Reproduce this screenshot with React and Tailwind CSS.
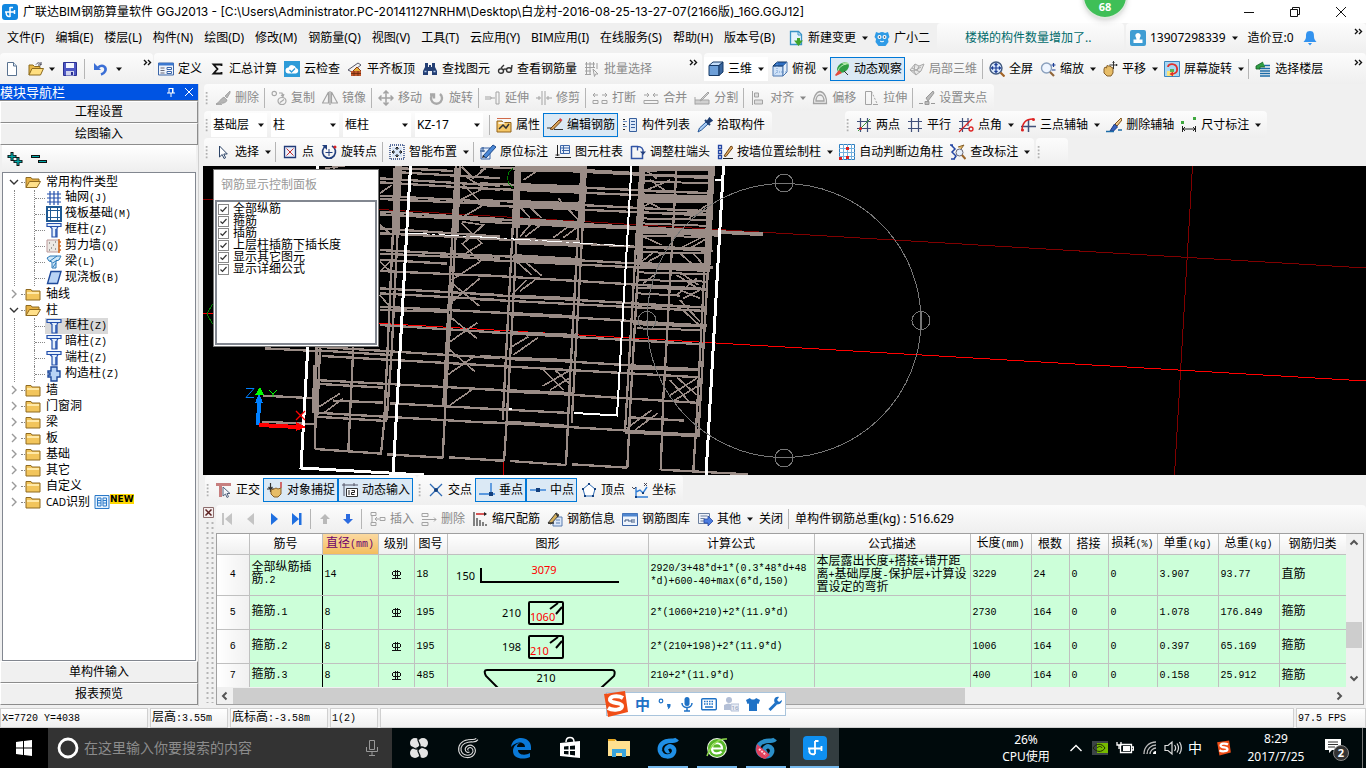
import React, { useState } from 'react';

const UI = "font-['Noto_Sans','Noto_Sans_CJK_SC',sans-serif]";

// 16x16 toolbar glyphs
const icons = {
  newFile: <><path d="M3.500 1.500h6l3 3.500v9.500h-9z" fill="#fff" stroke="#5a7390" /><path d="M9.500 1.500v3.500h3" fill="#dbe7f5" stroke="#5a7390" /></>,
  open: <><path d="M1 14V4h4l1.500 1.500H12V8" fill="#e8b84a" stroke="#8c6a1d" /><path d="M1 14l3-6.500h11.500l-3 6.500z" fill="#ffdf80" stroke="#8c6a1d" /><path d="M8 3.500c2-2.500 4-2 5 .5M13 1v3h-3" fill="none" stroke="#445" /></>,
  save: <><path d="M1.500 1.500h13v13h-13z" fill="#4d57c4" stroke="#2b3192" /><path d="M4 2h8v5H4z" fill="#f4f6ff" /><path d="M4 10h8v4.500H4z" fill="#cfd3ee" /><path d="M9 11h2v3H9z" fill="#2b3192" /></>,
  undo: <><path d="M5 6.500c5-4 9 0 7 4-1 2-2.500 2.500-4 3" fill="none" stroke="#3b6fd6" strokeWidth="2.600" /><path d="M1 2v7h7z" fill="#3b6fd6" /></>,
  define: <><path d="M.5 2h15v12H.5z" fill="#eef3fb" stroke="#3c66a8" /><path d="M.5 2h15v2.500H.5z" fill="#3c78cf" /><path d="M2.500 7h4M2.500 9.500h4M2.500 12h4" stroke="#667" /><path d="M9 6.500h4.500v2H9zM9 10.500h4.500v2H9z" fill="#fff" stroke="#3c66a8" /></>,
  sigma: <path d="M12.500 5V3.500h-8L8.500 8l-4 4.500h8V11" fill="none" stroke="#111" strokeWidth="1.800" />,
  cloud: <><path d="M0 0h16v16H0z" fill="#2d9bd8" /><path d="M4.500 12.500a3 3 0 010-6 4 4 0 017.500.5 2.800 2.800 0 010 5.500z" fill="#fff" /><path d="M5.500 9l2 2 3.500-3.500" fill="none" stroke="#2d9bd8" strokeWidth="1.300" /></>,
  slab: <><path d="M1 9l10-7 3 2-9 7z" fill="#f2f2f2" stroke="#556" /><path d="M4 10h10v5H4z" fill="#c0562c" /><path d="M6 10l4-4 4 4" fill="#e6b23c" stroke="#8e3c14" /><path d="M4 12.500h10M7 10v5M11 10v5" stroke="#5c2206" strokeWidth=".7" /></>,
  find: <><path d="M3 2h3v4h1V4h2v2h1V2h3v4l2 4v4h-5v-4H6v4H1v-4l2-4z" fill="#243f74" /><path d="M2.500 10.500h2M11.500 10.500h2" stroke="#a9c4ea" strokeWidth="1.500" /></>,
  glasses: <path d="M1.500 10c0-3 5-3 5 0s-5 3-5 0m8-1c0-3 5-3 5 0s-5 3-5 0m-3 0c1-1.500 2-1.500 3 0M4 7l3-3M14.500 8l.5-4" fill="none" stroke="#333" strokeWidth="1.400" />,
  batch: <path d="M1 3h10M1 6.500h10M1 10h6M1 13.500h6M2.500 1v13M6 1v13M9.500 1v6M9 8l5 5-2.500 0-1 2.500zM13 2v6" fill="none" stroke="#a0a0a0" />,
  cube: <><path d="M1 4.500h10v10H1z" fill="#6d9fd8" stroke="#173a66" /><path d="M1 4.500l4-3.500h10l-4 3.500z" fill="#c5defa" stroke="#173a66" /><path d="M11 4.500l4-3.500v10l-4 3.500z" fill="#38659e" stroke="#173a66" /></>,
  topView: <><path d="M1 5h10v10H1z" fill="#cfe2f8" stroke="#4a77b0" /><path d="M1 5l4-4h10l-4 4z" fill="#2f6fc2" stroke="#173a66" /><path d="M11 5l4-4v10l-4 4z" fill="#e6f0fb" stroke="#4a77b0" /><path d="M5 1v10h10M5 11l-4 4" fill="none" stroke="#7ba1d0" strokeDasharray="1 1" /></>,
  orbit: <><ellipse cx="9" cy="6.500" rx="6.500" ry="4.500" transform="rotate(-35 9 6.500)" fill="#2f9e44" /><path d="M8 2l5-1 2 2-5 1z" fill="#a7e3a0" /><path d="M4 10c1-4 4-6 8-7" stroke="#b9ecb4" fill="none" /><path d="M1 14l4-5 3 3-6 3z" fill="#e34b3c" /><path d="M10 10l4 4" stroke="#333" /></>,
  orbitGray: <path d="M1 9l5-6 4 2 5-2-3 7-5 4zM6 3l-1 7 2 4M10 5l-2 5M3 7l8 4M1 9l4 1 7-4" fill="#e6e6e6" stroke="#a9a9a9" />,
  full: <><circle cx="7" cy="7" r="6" fill="#dceafd" stroke="#41597e" strokeWidth="1.400" /><path d="M7 2.500v9M2.500 7h9M5.500 4L7 2.500 8.500 4M5.500 10L7 11.500 8.500 10M4 5.500L2.500 7 4 8.500M10 5.500L11.500 7 10 8.500" fill="none" stroke="#1d3f96" strokeWidth="1.200" /><path d="M11.500 11.500l4 4" stroke="#a26325" strokeWidth="2.200" /></>,
  zoom: <><circle cx="6.500" cy="7" r="5" fill="#eef5ff" stroke="#8aa0bd" strokeWidth="1.400" /><path d="M10 11l4 4" stroke="#8f6438" strokeWidth="2.200" /><path d="M11.500 4h4M13.500 2v4M12 9h3.500" stroke="#1d3f96" strokeWidth="1.200" /></>,
  pan: <><path d="M2 8l1-2 1.500 1L5 4.500l1.500.5L8 5l1 1 2 1v5l-2 3H5L2 12z" fill="#e7bd68" stroke="#86602a" /><path d="M11.500 0v8M7.500 4h8M10.500 1.500l1-1 1 1M14 3l1 1-1 1" fill="none" stroke="#333" /></>,
  rotateScreen: <><path d="M.5.5h15v15H.5z" fill="#a8d7f4" stroke="#3c86bd" /><path d="M3 10h7v5H3z" fill="#f7e27c" /><path d="M4 6c0-4 8-4 9 1s-3 6-6 6" fill="none" stroke="#e0302b" strokeWidth="1.800" /><path d="M9 10.500L5.500 13 9 15.500z" fill="#e0302b" /><path d="M6 8h4v3H6z" fill="#5ab552" /></>,
  floors: <><path d="M5 4.500h10M4 7.500h11M5 10h10M5 12.500h10M5 15h10" stroke="#1c6ca8" strokeWidth="1.400" /><path d="M8 1L1 5v3h4V6h5" fill="#2f9e44" stroke="#145c24" strokeWidth=".8" /></>,
  brushGray: <path d="M15 1l-5 5 2 2 3-5zM9 7l3 3c-1 4-6 3-11 4 3-1 4-5 8-7zM1 14.500h6" fill="#b5b5b5" stroke="#9c9c9c" strokeWidth=".8" />,
  copy: <path d="M5.500 3.500a2.200 2.200 0 11-4.400 0 2.200 2.200 0 014.400 0M15 11a4 3.500 0 11-8 0 4 3.500 0 018 0M8 3h3l1 3M10 5l2 1.500L13 4M9 12.500l4-3" fill="none" stroke="#a8a8a8" strokeWidth="1.200" />,
  mirror: <path d="M6.500 2v11h-6zM9.500 2v11h6zM8 1v14" fill="none" stroke="#a3a3a3" strokeWidth="1.200" />,
  move: <path d="M8 1v14M1 8h14M5.500 3.500L8 1l2.500 2.500M5.500 12.500L8 15l2.500-2.500M3.500 5.500L1 8l2.500 2.500M12.500 5.500L15 8l-2.500 2.500" fill="none" stroke="#a3a3a3" strokeWidth="1.500" />,
  rotate: <path d="M4 4a5.500 5.500 0 107 0M1 4.500h4v4" fill="none" stroke="#a8a8a8" strokeWidth="2.400" />,
  extend: <path d="M0 7h6v2H0M6 8h4M11 2v12h3V2z" fill="none" stroke="#a3a3a3" />,
  trim: <path d="M0 8h5M10 8h6M6 1v14M9 1v14M3 6v4M12 6v4" fill="none" stroke="#a3a3a3" />,
  breakIt: <path d="M1 10.500h5v3H1zM10 10.500h5v3h-5zM1 5h5M3 3L1 5l2 2M15 5h-5M13 3l2 2-2 2" fill="none" stroke="#a3a3a3" />,
  merge: <path d="M1 10.500h14v3H1zM1 5h5M4 3l2 2-2 2M15 5h-5M12 3l-2 2 2 2" fill="none" stroke="#a3a3a3" />,
  split: <path d="M1 14.500V7M1 10h14v4H1M14 2L7 9l-1 2 2-1 7-7z" fill="#d0d0d0" stroke="#a3a3a3" />,
  align: <path d="M2.500 1v14M4.500 3h4v4h-4zM4.500 10h8v4h-8z" fill="#ddd" stroke="#a3a3a3" />,
  offset: <path d="M8 1.500c5 1 7 7 6.500 12H1.500C1 8 4 2 8 1.500zM8 5c2.500 0 4 3 4 6H4c0-3 1.500-6 4-6z" fill="#eee" stroke="#a3a3a3" strokeWidth="1.300" />,
  stretch: <><path d="M2.500 1.500h6v13h-6zM10 14.500h5" fill="none" stroke="#a3a3a3" /><path d="M8.500 1.500l6 13" stroke="#a3a3a3" strokeDasharray="2 1.500" /></>,
  grip: <path d="M14 1L7 8l2 3 6-8zM0 13.500h4M6 11.500h4v3H6zM12 13.500h4" fill="#bbb" stroke="#999" />,
  props: <><path d="M1 4h5l1 1.500h8V15H1z" fill="#f6c766" stroke="#936318" /><path d="M1 1.500h14" stroke="#d06a4a" /><path d="M3 12l4-4 3 3 3-4" stroke="#333" fill="none" strokeWidth="1.500" /><path d="M2.500 6h6" stroke="#fff" strokeWidth="1.500" /></>,
  editRebar: <><path d="M0 11h8M7 12.500h9" stroke="#333" strokeWidth="1.200" /><path d="M3 12l9-9 2 1.500-8 8z" fill="#d6a35b" stroke="#6c4214" /><path d="M12 3l1-2 2.500 2L14 4.500z" fill="#d63d3d" /></>,
  list: <><path d="M7.500 1.500h7v13h-7z" fill="#dce8f8" stroke="#365f9d" /><path d="M9 4.500h4M9 7.500h4M9 10.500h4" stroke="#365f9d" /><path d="M1 2.500h3M1 7.500h3M1 12.500h3" stroke="#222" strokeDasharray="2 1" /><path d="M1 4.500h4M1 9.500h4" stroke="#6a8cc0" /></>,
  picker: <><path d="M1 15l1.500-4L9 5l2 2-6.500 6z" fill="#a9cdf6" stroke="#245596" /><path d="M8 3l5 5M10 5l2.500-3.500 2 2L11 6" stroke="#1f3f73" strokeWidth="2" fill="#1f3f73" /></>,
  twoPt: <><path d="M1 4.500h14M1 11.500h14M4.500 1v14M11.500 1v14" stroke="#41507a" strokeWidth="1.200" /><path d="M2 14L14 2" stroke="#3a9a3a" /><circle cx="4.500" cy="11.500" r="1.500" fill="#d22" /></>,
  parallel: <path d="M1 4.500h14M1 11.500h14M4.500 1v14M11.500 1v14" stroke="#41507a" strokeWidth="1.200" />,
  ptAngle: <><path d="M1 4.500h11M1 11.500h11M4.500 1v14M10 1v8" stroke="#41507a" strokeWidth="1.200" /><path d="M1 15L14 2" stroke="#d22" strokeWidth="1.300" /><circle cx="13" cy="12" r="2" fill="none" stroke="#d22" strokeWidth="1.300" /></>,
  threePt: <><path d="M1 9.500h15M8.500 3v12" stroke="#41507a" strokeWidth="1.500" /><path d="M2 14C2 6 6 2 13 2" fill="none" stroke="#d22" strokeWidth="1.500" /><circle cx="13.500" cy="2.500" r="1.500" fill="#d22" /><circle cx="2.500" cy="13" r="1.500" fill="#d22" /></>,
  delAxis: <><path d="M15 1L9 7l2 2 5-6z" fill="#f0c68b" stroke="#7b5019" /><path d="M8.500 7l3 3-4 4H4z" fill="#3a63bf" stroke="#1c3a80" /><path d="M0 14.500h8M12 13h4" stroke="#1c6ca8" strokeWidth="1.500" /></>,
  dims: <><path d="M1.500 9v6M14.500 9v6M2 12h12M4 10l-2 2 2 2M12 10l2 2-2 2" fill="none" stroke="#222" /><path d="M0 4h3v3H0zM12 0h3v3h-3z" fill="#3fa83f" /></>,
  pointer: <path d="M4.500 2v11l2.700-2.500 1.800 4 1.600-.8-1.800-3.700h3.500z" fill="#fff" stroke="#2c4467" />,
  point: <><path d="M2.500 2.500h11v11h-11z" fill="#e9effb" stroke="#223a78" strokeWidth="1.300" /><path d="M4.500 4.500l7 7M11.500 4.500l-7 7" stroke="#c22b2b" /></>,
  rotPoint: <><path d="M5 2a6.500 6.500 0 106 0" fill="none" stroke="#223f7d" strokeWidth="1.700" /><path d="M1 1h5v5z" fill="#223f7d" /><path d="M8 5v7M4.500 8.500h7" stroke="#223f7d" /><circle cx="14" cy="3" r="1.500" fill="#d22" /></>,
  smart: <><path d="M1 1h14v14H1z" fill="none" stroke="#223f7d" strokeDasharray="1 1" strokeWidth="1.400" /><path d="M3 3h10v10H3z" fill="#d8e6f8" /><path d="M8 3v3M8 10v3M3 8h3M10 8h3M6.500 5L8 3l1.500 2M6.500 11L8 13l1.500-2M5 6.500L3 8l2 1.500M11 6.500L13 8l-2 1.500" stroke="#111" fill="none" /></>,
  inPlace: <><path d="M1 4h9v11H1z" fill="#e4edf9" stroke="#3c66a8" /><path d="M3 12L13 1l3 2L6 14z" fill="#4b88d6" stroke="#1f4a8a" /><path d="M2 14l1-3 2 2z" fill="#222" /><path d="M0 7h5M3 3v5" stroke="#1f4a8a" /></>,
  colTable: <><path d="M5.500 1.500h9v8h-9z" fill="#e7effa" stroke="#3c66a8" /><path d="M5.500 4h9M8.500 2v7M7 6.500h7" stroke="#3c66a8" /><path d="M2.500 1v11M0 13.500h16M.5 11h4" stroke="#222" /></>,
  colEnd: <><path d="M1.500 2v12.500h11V10" fill="none" stroke="#3154a5" strokeWidth="1.500" /><path d="M1.500 2.500h6v4M7.500 2.500c4 0 6 2 5.500 6" fill="none" stroke="#3154a5" strokeWidth="1.300" /><path d="M10 7.500h6l-3 3.500z" fill="#223f7d" /></>,
  wallCol: <><path d="M1.500 1.500h3v3h-3zM1.500 6.500h3v3h-3zM1.500 11.500h3v3h-3z" fill="#fff" stroke="#2447a5" strokeWidth="1.300" /><path d="M6 14.500h10" stroke="#222" /><path d="M7 12l7-10 2 1.500-7 9z" fill="#e0ab62" stroke="#6c4214" /></>,
  autoCol: <><path d="M.5.500h15v15H.5z" fill="#fff" stroke="#2f7fbf" /><path d="M4.500 0v16M8.500 0v16M12.500 0v16M0 4.500h16M0 8.500h16M0 12.500h16" stroke="#74b0de" /><path d="M0 13h3v3H0zM7 12h3v3H7zM7 3h3v3H7z" fill="#d22" /></>,
  checkDim: <><path d="M1 1l4 4-3 3 4 4-2 3M0 1h3M1 15h4" fill="none" stroke="#2447a5" strokeWidth="1.500" /><circle cx="9.500" cy="8.500" r="3.500" fill="#e6effa" stroke="#667" /><path d="M12 11l3.500 4" stroke="#9b6529" strokeWidth="2" /><path d="M8 3l6-2-3 4" fill="#e7bd68" stroke="#86602a" /></>,
  ortho: <><path d="M0 2.500h15M4.500 2v13" stroke="#c77f7f" strokeWidth="3" /><path d="M7 5v9l2.500-2 1.500 3.500 1.500-.8-1.500-3.200h3z" fill="#f4f7fc" stroke="#52627c" /></>,
  snap: <><path d="M0 7h7M3.500 1v9M1.500 5l2 2 2-2" stroke="#333" fill="none" strokeWidth="1.200" /><path d="M14 0v6" stroke="#c33" strokeWidth="1.400" /><path d="M4 8l3-1 2-1 2 1 3-1v6l-3 3H7l-3-3z" fill="#e7bd68" stroke="#86602a" /></>,
  dynIn: <><path d="M0 3h16M2 1v13M12 1v3" stroke="#556" /><path d="M4.500 6.500h11v8h-11z" fill="#fff" stroke="#333" /><path d="M7 8v5M9.500 8.500h3v2h-3v2h3" stroke="#222" fill="none" /></>,
  cross: <><path d="M2 2l12 12M14 2L2 14" stroke="#2f6cb5" strokeWidth="1.300" /><circle cx="8" cy="8" r="2" fill="#123f7d" /></>,
  perp: <><path d="M0 12h16M12 1v11" stroke="#2f7dd6" strokeWidth="1.400" /><path d="M10 10h4v4h-4z" fill="#123f7d" /></>,
  mid: <><path d="M0 8h16" stroke="#2f7dd6" strokeWidth="1.400" /><path d="M6 6h4v4H6z" fill="#123f7d" /></>,
  vertex: <><path d="M8 2l6 5-2 7H4L2 7z" fill="#fff" stroke="#2f6cb5" /><path d="M7 1h2v2H7zM13 6h2v2h-2zM1 6h2v2H1zM3 13h2v2H3zM11 13h2v2h-2z" fill="#123f7d" /></>,
  coord: <><path d="M4 5v10h12M4 10l4-2 3 3 4-6" fill="none" stroke="#2f7dd6" strokeWidth="1.400" /><path d="M0 5l2 2 2-2M12 1l3 3M15 1l-3 3" stroke="#334" fill="none" strokeWidth=".9" /><path d="M3 14h2v2H3zM10 10h2v2h-2z" fill="#123f7d" /></>,
  insert: <path d="M1 1.500h5v3H1zM1 11.500h5v3H1zM2 4v8M10 6.500h5v3h-5zM9 8H5M7 6L5 8l2 2" fill="none" stroke="#a3a3a3" />,
  remove: <path d="M1 2.500h6v3H1zM1 11.500h6v3H1zM1 8.500h14M13 6.500l2 2-2 2" fill="none" stroke="#a3a3a3" />,
  scaleRebar: <><path d="M2 1v14M5 7v8M8 9v6M11 11v4M14 13v2" stroke="#444" strokeWidth="1.300" /><path d="M4 3h10" stroke="#c22" strokeWidth="1.500" /><path d="M12 1l3 2-3 2z" fill="#222" /></>,
  rebarInfo: <><path d="M6 6h9v9H6z" fill="#dbe7f8" stroke="#5a7cb0" /><path d="M1 12l8-10 3 2-8 9z" fill="#d6b05b" stroke="#444" /><path d="M9 2l2 4M1 12h6" stroke="#333" strokeWidth="1.500" /><path d="M9 9h4M9 12h4" stroke="#5a7cb0" /></>,
  rebarLib: <><path d="M.5 2.500h15v12H.5z" fill="#eef4fc" stroke="#3c66a8" /><path d="M.5 2.500h15v3H.5z" fill="#4f86d0" /><path d="M3 11V9h4v2M9 11V9h4M9 11h4" fill="none" stroke="#3c5680" /></>,
  other: <><path d="M1.500 2.500h11v10h-11z" fill="#eef2fa" stroke="#6b7f9e" /><path d="M3.500 5h7M3.500 7.500h4M3.500 10h4" stroke="#6b7f9e" /><path d="M7 8h4V5l5 5-5 5v-3H7z" fill="#4c7de0" stroke="#2447a5" strokeWidth=".8" /></>,
  change: <><path d="M2.500 1.500h8l3 3v10h-11z" fill="#e5f3fd" stroke="#3b94c8" strokeWidth="1.300" /><path d="M10 1.500v3.500h3.500" fill="none" stroke="#3b94c8" /><path d="M9 8h3v2.500h3L10.500 16 6 10.500h3z" fill="#42a52b" /></>,
  mascot: <><path d="M2 2l3 1q3-2 6 0l3-1 1.500 5-1.500 2 .5 3-3 4h-7l-3-4 .5-3L.5 7z" fill="#2f9be6" /><circle cx="5.500" cy="7" r="2" fill="#fff" /><circle cx="10.500" cy="7" r="2" fill="#fff" /><circle cx="5.500" cy="7" r=".8" fill="#124" /><circle cx="10.500" cy="7" r=".8" fill="#124" /><path d="M6 11c1 1 3 1 4 0" stroke="#fff" fill="none" /></>,
  user: <><rect width="16" height="16" rx="2" fill="#3f9dd3" /><path d="M8 3a2.700 2.700 0 012 4.500L9.500 9.500h3V13h-9V9.500h3L6 7.500A2.700 2.700 0 018 3z" fill="#fff" /></>,
  bell: <path d="M8 1c4 0 4 3 4 6 0 2 1 3 2.500 5h-13C3 10 4 9 4 7c0-3 0-6 4-6zM6 13h4l-2 2.500z" fill="#3393ef" />,
};

const Icon = ({ name }) => (
  <svg viewBox="0 0 16 16" className="w-4 h-4 shrink-0" aria-hidden="true">{icons[name]}</svg>
);

const Arrow = ({ dim }) => (
  <svg viewBox="0 0 12 12" className="w-3 h-3 shrink-0" aria-hidden="true">
    <path d="M3 4.500h6L6 8z" fill={dim ? '#888' : '#111'} />
  </svg>
);

const Sep = () => <span className="w-px h-5 mx-0.5 bg-[#b5b5b5] shrink-0" />;

const Grip = () => (
  <svg viewBox="0 0 8 20" className="w-[7px] h-5 shrink-0" aria-hidden="true">
    <path d="M3 3v14" stroke="#b0b0b0" strokeWidth="2" strokeDasharray="2 2" />
  </svg>
);

const More = () => (
  <svg viewBox="0 0 10 10" className="w-2.5 h-2.5 mb-3 shrink-0" aria-hidden="true">
    <path d="M1 2l2.500 2.500L1 7M5 2l2.500 2.500L5 7" fill="none" stroke="#111" strokeWidth="1.400" />
  </svg>
);

const Tool = ({ icon, children, arrow, active, disabled }) => (
  <button
    disabled={disabled}
    className={`flex items-center gap-1 h-6 pl-[3px] pr-0.5 border whitespace-nowrap shrink-0 ${
      active ? 'border-[#0078d7] bg-[#dbe9f5]' : 'border-transparent'
    } ${disabled ? 'text-[#8a8a8a]' : ''}`}
  >
    {icon && <Icon name={icon} />}
    <span>{children}</span>
    {arrow && <span className="-ml-px -mr-1"><Arrow dim={disabled} /></span>}
  </button>
);

const Band = ({ children, className = '' }) => (
  <div className={`flex items-center h-full rounded bg-gradient-to-b from-[#fcfcfc] to-[#efefef] ${className}`}>{children}</div>
);

// half-width runs are set smaller so that two of them fill one full-width cell
const Song = ({ children }) =>
  children.split(/([\x20-\x7e]+)/).filter(Boolean).map((part, i) =>
    /^[\x20-\x7e]/.test(part) ? <span key={i} className="text-[10px]">{part}</span> : <span key={i}>{part}</span>
  );

const menus = ['文件(F)', '编辑(E)', '楼层(L)', '构件(N)', '绘图(D)', '修改(M)', '钢筋量(Q)', '视图(V)', '工具(T)', '云应用(Y)', 'BIM应用(I)', '在线服务(S)', '帮助(H)', '版本号(B)'];

const TitleBar = () => (
  <header className="flex items-center h-[23px] bg-white pl-0.5 pr-5">
    <svg viewBox="0 0 16 16" className="w-4 h-4"><rect width="16" height="16" rx="3" fill="#1187e0" /><path d="M8 3v10M3 8h10M8 3.500h3M4.500 8c-1 3 1 5 3.500 4.500M12.500 6v4" fill="none" stroke="#fff" strokeWidth="1.500" /></svg>
    <h1 className="ml-[5px] whitespace-nowrap font-['Inter','Noto_Sans_CJK_SC',sans-serif]">广联达BIM钢筋算量软件 GGJ2013 - [C:\Users\Administrator.PC-20141127NRHM\Desktop\白龙村-2016-08-25-13-27-07(2166版)_16G.GGJ12]</h1>
    <div className="ml-auto flex items-center gap-9">
      <button aria-label="最小化"><svg viewBox="0 0 10 10" className="w-2.5 h-2.5"><path d="M0 5.500h10" stroke="#111" /></svg></button>
      <button aria-label="还原"><svg viewBox="0 0 10 10" className="w-2.5 h-2.5"><path d="M.5 2.500h7v7h-7zM2.500 2.500v-2h7v7h-2" fill="none" stroke="#111" /></svg></button>
      <button aria-label="关闭"><svg viewBox="0 0 10 10" className="w-2.5 h-2.5"><path d="M0 0l10 10M10 0L0 10" stroke="#111" /></svg></button>
    </div>
  </header>
);

const MenuBar = () => (
  <div className="flex items-center h-[30px]">
    <nav className="flex items-center gap-px pl-0.5 mr-1">
      {menus.map((m) => <button key={m} className="px-[5px] whitespace-nowrap">{m}</button>)}
    </nav>
    <Tool icon="change" arrow>新建变更</Tool>
    <Tool icon="mascot">广小二</Tool>
    <Band className="flex-1 ml-1 pl-7 text-[#006b6b]"><span className="whitespace-nowrap">楼梯的构件数量增加了..</span></Band>
    <Band className="w-60 ml-0.5 pr-0.5">
      <Tool icon="user" arrow>13907298339</Tool>
      <span className="ml-2 whitespace-nowrap">造价豆:0</span>
      <button aria-label="通知" className="ml-2"><Icon name="bell" /></button>
      <span className="ml-auto"><More /></span>
    </Band>
  </div>
);

const MainToolbar = () => (
  <div className="flex items-center h-[31px]">
    <Band className="w-[153px] pl-0.5">
      <button aria-label="新建" className="px-0.5"><Icon name="newFile" /></button>
      <button aria-label="打开" className="flex items-center pl-1.5"><Icon name="open" /><span className="ml-0.5"><Arrow /></span></button>
      <button aria-label="保存" className="px-1"><Icon name="save" /></button>
      <Sep />
      <button aria-label="撤销" className="flex items-center pl-1.5"><Icon name="undo" /><span className="ml-1"><Arrow /></span></button>
      <span className="ml-auto"><More /></span>
    </Band>
    <Band className="flex-1 ml-px pr-[3px] overflow-hidden">
      <Tool icon="define">定义</Tool>
      <Tool icon="sigma">汇总计算</Tool>
      <Tool icon="cloud">云检查</Tool>
      <Tool icon="slab">平齐板顶</Tool>
      <Tool icon="find">查找图元</Tool>
      <Tool icon="glasses">查看钢筋量</Tool>
      <Tool icon="batch" disabled>批量选择</Tool>
      <span className="ml-auto"><More /></span>
    </Band>
    <Band className="w-[662px] ml-0.5 pr-0.5">
      <span className="flex bg-white pr-0.5"><Tool icon="cube" arrow>三维</Tool></span>
      <Tool icon="topView" arrow>俯视</Tool>
      <Tool icon="orbit" active>动态观察</Tool>
      <Tool icon="orbitGray" disabled>局部三维</Tool>
      <Sep />
      <Tool icon="full">全屏</Tool>
      <Tool icon="zoom" arrow>缩放</Tool>
      <Tool icon="pan" arrow>平移</Tool>
      <Tool icon="rotateScreen" arrow>屏幕旋转</Tool>
      <Sep />
      <Tool icon="floors">选择楼层</Tool>
      <span className="ml-auto"><More /></span>
    </Band>
  </div>
);

const folderClosed = <><path d="M1 3.500h5l1 1.500h8v9H1z" fill="#f2c55c" stroke="#8f6a20" /><path d="M2 6h12v2H2z" fill="#ffe9a8" /></>;
const folderOpen = <><path d="M1 13.500v-10h5l1 1.500h7v3" fill="#e6b145" stroke="#8f6a20" /><path d="M1 13.500L4.500 7.500h11l-3.500 6z" fill="#ffe08a" stroke="#8f6a20" /></>;
const column = <><path d="M1 1.500h14v3H1zM4 4.500h8l-1 2v8.500H6V6.500z" fill="#e4effc" stroke="#2450ac" strokeWidth="1.200" /><path d="M10 7v8" stroke="#2450ac" strokeWidth="1.500" /></>;

const treeIcons = {
  axis: <><path d="M1 4h14M1 8h14M1 12h14M4 1v14M8 1v14M12 1v14" stroke="#2450ac" strokeWidth="1.200" /></>,
  raft: <><path d="M1 1h14v14H1z" fill="#fff" stroke="#205a93" strokeWidth="2" /><path d="M4.500 4.500h7v7h-7zM4.500 1v14M11.500 1v14M1 4.500h14M1 11.500h14" fill="none" stroke="#205a93" /></>,
  column,
  wall: <><path d="M1 2h12v12H1z" fill="#ece8e4" stroke="#b99" /><path d="M13 1v14M13 4h2M13 8h2M13 12h2" stroke="#d2691e" strokeWidth="1.500" /><path d="M3 5h1M7 7h1M5 10h1M9 4h1M9 11h1M3 12h1" stroke="#555" /></>,
  beam: <><path d="M1 4l3-2h11l-2 4-3 1v7H6V8L3 7z" fill="#cfe7f8" stroke="#2a79b8" /><path d="M4 7l7-5M7 13l3-4M7 9l4-3" stroke="#2a79b8" /></>,
  slab: <path d="M5 1.500h10l-3.500 12H1.500z" fill="#b9d3f5" stroke="#1f4a9c" strokeWidth="1.400" />,
  struct: <><path d="M5 1h6v4h3v6h-3v4H5v-4H2V9h2V7H2V5h3z" fill="#b9d3f5" stroke="#1f4a9c" strokeWidth="1.400" /></>,
};

const tree = [
  { label: '常用构件类型', open: true, items: [['轴网(J)', 'axis'], ['筏板基础(M)', 'raft'], ['框柱(Z)', 'column'], ['剪力墙(Q)', 'wall'], ['梁(L)', 'beam'], ['现浇板(B)', 'slab']] },
  { label: '轴线' },
  { label: '柱', open: true, items: [['框柱(Z)', 'column', true], ['暗柱(Z)', 'column'], ['端柱(Z)', 'column'], ['构造柱(Z)', 'struct']] },
  { label: '墙' },
  { label: '门窗洞' },
  { label: '梁' },
  { label: '板' },
  { label: '基础' },
  { label: '其它' },
  { label: '自定义' },
  { label: 'CAD识别', isNew: true },
];

const SideButton = ({ children }) => (
  <button className="h-[22px] w-full bg-[#f0f0f0] border border-t-white border-l-white border-r-[#8c8c8c] border-b-[#8c8c8c] shrink-0">{children}</button>
);

const Sidebar = () => (
  <aside className="w-[199px] shrink-0 flex flex-col border-r border-[#d0d0d0] leading-4">
    <div className="flex items-center h-4 bg-[#0054e3] text-white text-[13px] pr-1">
      <h2>模块导航栏</h2>
      <button aria-label="固定" className="ml-auto"><svg viewBox="0 0 10 10" className="w-2.5 h-2.5"><path d="M3 1v5M7 1v5M3 1.500h4M6.500 1v5M1 6h8M5 6v4" stroke="#fff" fill="none" /></svg></button>
      <button aria-label="关闭" className="ml-2"><svg viewBox="0 0 10 10" className="w-2.5 h-2.5"><path d="M1 1l8 8M9 1L1 9" stroke="#fff" /></svg></button>
    </div>
    <div className="border-t border-[#8c8c8c]">
      <SideButton>工程设置</SideButton>
      <SideButton>绘图输入</SideButton>
    </div>
    <div className="flex items-center gap-1.5 h-[27px] mx-0.5 px-1 bg-gradient-to-b from-white to-[#eee]">
      <button aria-label="展开"><svg viewBox="0 0 18 18" className="w-4.5 h-4.5"><path d="M6 2v9M1.500 6.500h9M12 7v9M7.500 11.500h9" stroke="#111" strokeWidth="3" /><path d="M6 3v7M2.500 6.500h7M12 8v7M8.500 11.500h7" stroke="#0aa" strokeWidth="1.300" /></svg></button>
      <button aria-label="折叠"><svg viewBox="0 0 18 18" className="w-4.5 h-4.5"><path d="M1 6.500h9M8 11.500h9" stroke="#111" strokeWidth="3" /><path d="M2 6.500h7M9 11.500h7" stroke="#0aa" strokeWidth="1" /></svg></button>
    </div>
    <div className="flex-1 mx-0.5 pt-px border border-[#828790] bg-white">
      {tree.map((node) => (
        <div key={node.label}>
          <div className="flex items-center h-4 pl-1.5">
            <svg viewBox="0 0 10 10" className="w-2.5 h-2.5 shrink-0">
              <path d={node.open ? 'M1 3l4 4 4-4' : 'M3 1l4 4-4 4'} fill="none" stroke={node.open ? '#333' : '#999'} strokeWidth="1.400" />
            </svg>
            <span className="w-1 ml-0.5 border-t border-dotted border-[#888]" />
            <svg viewBox="0 0 16 16" className="w-4 h-4 shrink-0">{node.open ? folderOpen : folderClosed}</svg>
            <span className="ml-[5px]"><Song>{node.label}</Song></span>
            {node.isNew && (
              <>
                <svg viewBox="0 0 16 16" className="w-4 h-4 ml-1"><path d="M1 1.500h14v13H1z" fill="#e6f2fd" stroke="#2a79c8" /><path d="M3.500 4h3.500v8H3.500zM9 4h3.500v8H9zM3.500 6.500h3.500M3.500 9h3.500M9 6.500h3.500M9 9h3.500" fill="none" stroke="#2a79c8" /></svg>
                <span className="self-start h-2.5 bg-[#ffd800] text-[9px] leading-2.5 font-bold font-['DejaVu_Sans',sans-serif]">NEW</span>
              </>
            )}
          </div>
          {node.items && (
            <ul className="ml-[11px] pl-[19px] border-l border-dotted border-[#888]">
              {node.items.map(([label, icon, selected]) => (
                <li key={label} className="flex items-center h-4 border-l border-dotted border-[#888]">
                  <span className="w-2.5 border-t border-dotted border-[#888]" />
                  <span className={`flex items-center gap-[3px] h-4 px-px ${selected ? 'bg-[#d9d9d9]' : ''}`}>
                    <svg viewBox="0 0 16 16" className="w-4 h-4 shrink-0">{treeIcons[icon]}</svg>
                    <span className="whitespace-nowrap font-['Liberation_Mono','Noto_Sans_CJK_SC',monospace]"><Song>{label}</Song></span>
                  </span>
                </li>
              ))}
            </ul>
          )}
        </div>
      ))}
    </div>
    <SideButton>单构件输入</SideButton>
    <SideButton>报表预览</SideButton>
    <div className="h-px" />
  </aside>
);

const Combo = ({ label, value, className }) => (
  <label className={`relative flex items-center h-6 bg-white mr-1 ${className}`}>
    <select aria-label={label} defaultValue={value} className="appearance-none w-full h-full pl-0.5 bg-transparent outline-none">
      <option>{value}</option>
    </select>
    <span className="absolute right-0 top-1.5 pointer-events-none"><Arrow /></span>
  </label>
);

const EditToolbars = () => (
  <>
    <div className="flex h-[27px] pl-px">
      <Band className="pr-1">
        <Grip />
        <Tool icon="brushGray" disabled>删除</Tool>
        <Sep />
        <Tool icon="copy" disabled>复制</Tool>
        <Tool icon="mirror" disabled>镜像</Tool>
        <Sep />
        <Tool icon="move" disabled>移动</Tool>
        <Tool icon="rotate" disabled>旋转</Tool>
        <Sep />
        <Tool icon="extend" disabled>延伸</Tool>
        <Tool icon="trim" disabled>修剪</Tool>
        <Sep />
        <Tool icon="breakIt" disabled>打断</Tool>
        <Tool icon="merge" disabled>合并</Tool>
        <Tool icon="split" disabled>分割</Tool>
        <Sep />
        <Tool icon="align" disabled arrow>对齐</Tool>
        <Tool icon="offset" disabled>偏移</Tool>
        <Tool icon="stretch" disabled>拉伸</Tool>
        <Sep />
        <Tool icon="grip" disabled>设置夹点</Tool>
      </Band>
    </div>
    <div className="flex h-[27px] pl-px">
      <Band className="pr-1">
        <Grip />
        <Combo label="楼层" value="基础层" className="w-14" />
        <Combo label="构件类型" value="柱" className="w-17" />
        <Combo label="构件" value="框柱" className="w-17" />
        <Combo label="名称" value="KZ-17" className="w-17" />
        <Sep />
        <Tool icon="props">属性</Tool>
        <Tool icon="editRebar" active>编辑钢筋</Tool>
        <Tool icon="list">构件列表</Tool>
        <Tool icon="picker">拾取构件</Tool>
      </Band>
      <Band className="ml-[73px] pr-1">
        <Grip />
        <Tool icon="twoPt">两点</Tool>
        <Tool icon="parallel">平行</Tool>
        <Tool icon="ptAngle" arrow>点角</Tool>
        <Tool icon="threePt" arrow>三点辅轴</Tool>
        <Tool icon="delAxis">删除辅轴</Tool>
        <Tool icon="dims" arrow>尺寸标注</Tool>
      </Band>
    </div>
    <div className="flex h-7 pl-px">
      <Band className="pr-0.5">
        <Grip />
        <Tool icon="pointer" arrow>选择</Tool>
        <Sep />
        <Tool icon="point">点</Tool>
        <Tool icon="rotPoint">旋转点</Tool>
        <Sep />
        <Tool icon="smart" arrow>智能布置</Tool>
        <Sep />
        <Tool icon="inPlace">原位标注</Tool>
        <Tool icon="colTable">图元柱表</Tool>
        <Tool icon="colEnd">调整柱端头</Tool>
        <Tool icon="wallCol" arrow>按墙位置绘制柱</Tool>
        <Tool icon="autoCol">自动判断边角柱</Tool>
        <Tool icon="checkDim" arrow>查改标注</Tool>
      </Band>
      <Band className="w-8 ml-0.5"><Grip /></Band>
    </div>
  </>
);

// two survey sheets of the rebar cage: left one starts at x=200, right one at x=480, three units per pixel
const leftBars = 'M588 0L553 765M603 0L575 560 560 765M596 0L596 180M553 765L543 866M350 545L345 852M360 545L352 752M342 600L340 745M460 545L445 855M345 852L545 866M560 868L728 878M748 877L900 887M768 0L730 720M780 0L740 640M745 560L728 878M195 550L345 558M350 545L900 580M350 556L570 570M365 573L900 603M345 645L900 675M345 656L550 668M190 692L345 700M400 707L550 713M570 715L900 733M345 743L900 775M345 755L560 768M185 770L350 778M540 40L900 62M540 52L900 74M540 92L900 112M540 102L900 118M540 140L900 162M540 148L900 168M540 190L900 215M540 205L900 222M540 255L900 275M540 266L900 282M540 284L740 296M540 318L900 334M540 370L900 390M540 385L900 405M540 425L900 443M540 480L900 503M600 22L900 40M605 10L760 18M540 435L740 440';
const leftBraces = 'M785 5L820 40 857 10M780 105L852 70 790 30M790 60L850 120 790 155M785 170L850 180 790 235M785 175L845 235 790 270M785 235L840 290 755 345M750 350L838 423M840 340L750 415M750 455L830 520M832 473L750 530M750 555L825 620M825 573L745 628M750 720L815 675M350 730L420 685M370 745L430 700M540 85L575 60M540 180L575 210M540 290L572 320M540 320L570 290M540 390L565 420M375 10L450 0M420 0L400 10';
const rightBars = 'M108 0L68 765M122 0L80 770M80 770L72 887M305 0L270 640 258 900M318 0L275 775M482 0L435 798M492 0L450 735 442 908M590 0L550 700 542 915M690 0L650 760 640 915M702 0L665 640 655 810M0 883L72 887M90 888L258 900M276 898L442 908M542 914L805 928M0 5L700 40M0 55L700 85M0 70L700 100M0 105L700 140M0 120L700 152M0 160L720 200M0 170L845 208M0 220L700 258M0 270L700 308M0 284L690 318M0 330L680 372M0 388L680 428M0 403L680 438M0 440L680 482M0 500L670 538M0 573L660 614M0 600L660 637M0 672L660 714M0 730L270 744M0 770L660 810M450 757L612 767M310 15L480 25';
const thickBars = 'M106 12L322 12M115 64L322 72M112 115L305 122M108 168L305 180M105 228L300 236M100 277L298 289M478 105L695 105M478 195L715 205M480 10L700 8M480 302L690 305';
const mediumBars = 'M95 394L288 402M90 446L285 456M80 580L280 588M78 772L265 785M445 608L660 614M435 800L660 812M700 200L848 208M460 475L660 482M90 504L285 512M85 678L275 686';
const denseBars = 'M480 28L700 35M480 48L700 56M480 78L700 85M480 88L700 95M480 130L695 138M480 142L695 146M480 160L695 165M480 175L695 183M480 212L690 216M480 245L690 250M480 262L690 264M475 322L688 328M475 345L685 350M475 368L680 374M475 385L600 392M475 420L680 428M470 490L660 495';
const rightBraces = 'M115 120L150 158M145 122L185 160M235 100L295 165M120 215L150 180M135 215L185 178M220 218L265 185M250 218L295 185M110 290L155 330M135 290L185 332M105 380L140 345M120 378L165 345M95 545L145 515M100 570L175 517M190 615L250 675M225 615L268 655M268 617L188 663M268 640L210 675M440 790L515 735M465 795L533 745M570 645L625 708M592 638L650 690M650 640L568 692M650 665L580 708M490 10L530 40M500 75L570 45M510 45L560 80M490 125L545 95M495 105L540 130M620 165L680 120M600 250L680 210M630 250L690 215M490 215L545 240M485 290L520 262M505 290L550 265M600 265L640 300M640 265L670 300M590 330L660 375M600 322L655 360M590 390L650 340M600 375L660 400M610 400L660 375M600 405L660 470M605 432L655 478M490 355L530 325M130 45L175 15M0 20L15 8';

const Viewport = () => (
  <svg viewBox="203 166 1163 309" preserveAspectRatio="xMinYMin slice" className="absolute inset-0 w-full h-full" shapeRendering="crispEdges">
    <g fill="none" stroke="#800000">
      <path d="M203 199L1366 268M1192.500 166L1174.500 475" />
      <path d="M503 462v13" stroke="#d00000" />
      <path d="M203 313L1366 381" stroke="#f00" />
    </g>
    <path d="M220 303l-8 2-5 9 5 9 8 2" fill="none" stroke="#008000" />
    <g fill="none" stroke="#9a8c86" transform="translate(200 165) scale(.33333)">
      <path d={leftBars} strokeWidth="7" />
      <path d={leftBraces} strokeWidth="5" />
      <path d="M590 10L590 210" strokeWidth="22" />
      <path d="M772 10L768 200" strokeWidth="18" />
    </g>
    <g fill="none" stroke="#9a8c86" transform="translate(480 165) scale(.33333)">
      <path d={rightBars} strokeWidth="7" />
      <path d={thickBars} strokeWidth="20" />
      <path d={mediumBars} strokeWidth="11" />
      <path d={denseBars} strokeWidth="6" />
      <path d={rightBraces} strokeWidth="5" />
      <path d="M114 5L110 190M312 5L305 170M486 5L478 300M694 5L684 300" strokeWidth="18" />
    </g>
    <g fill="none" stroke="#fff" strokeWidth="3">
      <path d="M410.500 166L393 475M318 166L301 468 424 475M723.500 166L706 475" />
      <path d="M631.500 166L617 415.500 574 413" strokeWidth="2" />
      <path d="M509 409h3M715 180h8" strokeWidth="2" />
      <path d="M408 233L500 238M480 237L630 246" strokeWidth="1" strokeDasharray="20 4 3 4" />
    </g>
    <path d="M513 188a12 12 0 010-20" fill="none" stroke="#008000" />
    <g fill="none" stroke="#777">
      <circle cx="784" cy="320.500" r="137" />
      <circle cx="784" cy="183" r="9" />
      <circle cx="784" cy="458" r="9" />
      <circle cx="647" cy="320.500" r="9" />
      <circle cx="921" cy="320.500" r="9" />
      <path d="M647 312v17M921 312v17" />
    </g>
    <g strokeWidth="4">
      <path d="M258 425L259 402" stroke="#0080ff" />
      <path d="M255 403l4-10 4 10z" fill="#0080ff" />
      <path d="M255 395l5-8 4 8z" fill="#0f0" />
      <path d="M259 425l38 2" stroke="#f00" />
      <path d="M296 422l10 5-10 4z" fill="#f00" />
    </g>
    <g fill="none" shapeRendering="auto">
      <path d="M246 388.500h8l-8 9h8" stroke="#0080ff" />
      <path d="M269 390l4 4 4-4M273 394v3" stroke="#0f0" />
      <path d="M296 411l9 9M305 411l-9 9" stroke="#f00" strokeWidth="1.300" />
    </g>
  </svg>
);

const options = ['全部纵筋', '箍筋', '插筋', '上层柱插筋下插长度', '显示其它图元', '显示详细公式'];

const DisplayPanel = () => {
  const [checked, setChecked] = useState(options);
  const toggle = (o) => setChecked(checked.includes(o) ? checked.filter((c) => c !== o) : [...checked, o]);

  return (
    <section className="absolute left-2.5 top-[3px] w-[166px] h-[178px] bg-white border border-[#777] flex flex-col">
      <h3 className="h-[30px] pl-[7px] leading-[29px] text-[#999]">钢筋显示控制面板</h3>
      <div className="flex-1 m-px mt-0 border-2 border-[#828790] pl-px pt-px">
        {options.map((o) => (
          <label key={o} className="flex items-center gap-1 h-3 leading-3 whitespace-nowrap">
            <span className="relative w-[11px] h-[11px]">
              <input type="checkbox" checked={checked.includes(o)} onChange={() => toggle(o)} className="peer block appearance-none w-[11px] h-[11px] border border-[#888] bg-white" />
              <svg viewBox="0 0 11 11" className="absolute inset-0 w-[11px] h-[11px] hidden peer-checked:block pointer-events-none"><path d="M2.500 5.500l2 2 4-4.500" fill="none" stroke="#333" strokeWidth="1.200" /></svg>
            </span>
            {o}
          </label>
        ))}
      </div>
    </section>
  );
};

const SnapBar = () => (
  <div className="flex items-center h-[30px] pl-0.5">
    <Band className="pr-1">
      <Grip />
      <Tool icon="ortho">正交</Tool>
      <Tool icon="snap" active>对象捕捉</Tool>
      <Tool icon="dynIn" active>动态输入</Tool>
    </Band>
    <Band className="pr-1">
      <Grip />
      <Tool icon="cross">交点</Tool>
      <Tool icon="perp" active>垂点</Tool>
      <Tool icon="mid" active>中点</Tool>
      <Tool icon="vertex">顶点</Tool>
      <Tool icon="coord">坐标</Tool>
    </Band>
  </div>
);

const NavButton = ({ label, d, color }) => (
  <button aria-label={label} className="pl-1 pr-[3px]">
    <svg viewBox="0 0 16 16" className="w-4 h-4"><path d={d} fill={color} /></svg>
  </button>
);

const GradeMark = () => (
  <svg viewBox="0 0 9 11" className="w-[9px] h-[11px] mx-auto" aria-label="HRB400" shapeRendering="crispEdges">
    <path d="M3.500 1v8M5.500 1v8M1 2.500h7M1 6.500h7M.5 3v3M8.500 3v3M0 9.500h9" fill="none" stroke="#111" />
  </svg>
);

const numFont = "font-['Noto_Sans',sans-serif]";

const StirrupShape = ({ side, inner }) => (
  <svg viewBox="0 0 200 33" className={`w-[200px] h-[33px] mx-auto ${numFont}`}>
    <text x="73" y="21" fontSize="11" textAnchor="end">{side}</text>
    <rect x="81" y="6" width="34" height="22" rx="1" fill="none" stroke="#000" strokeWidth="2" />
    <path d="M102 13l8-6M108 18l6-7" stroke="#000" strokeWidth="2" />
    <text x="82" y="25" fontSize="11" fill="#f00">{inner}</text>
  </svg>
);

const shapes = {
  bar: (
    <svg viewBox="0 0 200 40" className={`w-[200px] h-10 mx-auto ${numFont}`}>
      <text x="27" y="25" fontSize="11" textAnchor="end">150</text>
      <path d="M33 13v14h138" fill="none" stroke="#000" strokeWidth="2" />
      <text x="96" y="19" fontSize="11" fill="#f00" textAnchor="middle">3079</text>
    </svg>
  ),
  stirrup1: <StirrupShape side="210" inner="1060" />,
  stirrup2: <StirrupShape side="198" inner="210" />,
  tie: (
    <svg viewBox="0 0 200 24" className={`w-[200px] h-6 mx-auto ${numFont}`}>
      <path d="M50 24L38 12Q35 6 39 6H164Q168 6 166 12L153 24" fill="none" stroke="#000" strokeWidth="2" />
      <text x="98" y="18" fontSize="11" textAnchor="middle">210</text>
    </svg>
  ),
};

const columns = [
  { label: '', w: 'w-8' },
  { label: '筋号', w: 'w-[73px]' },
  { label: '直径(mm)', w: 'w-[56px]' },
  { label: '级别', w: 'w-[36px]' },
  { label: '图号', w: 'w-[33px]' },
  { label: '图形', w: 'w-[201px]' },
  { label: '计算公式', w: 'w-[166px]' },
  { label: '公式描述', w: 'w-[156px]' },
  { label: '长度(mm)', w: 'w-[61px]' },
  { label: '根数', w: 'w-[38px]' },
  { label: '搭接', w: 'w-[39px]' },
  { label: '损耗(%)', w: 'w-[49px]' },
  { label: '单重(kg)', w: 'w-[61px]' },
  { label: '总重(kg)', w: 'w-[61px]' },
  { label: '钢筋归类', w: 'w-[67px]' },
];

const rows = [
  { h: 'h-[41px]', cells: ['4', '全部纵筋插\n筋.2', '14', null, '18', 'bar', '2920/3+48*d+1*(0.3*48*d+48\n*d)+600-40+max(6*d,150)', '本层露出长度+搭接+错开距\n离+基础厚度-保护层+计算设\n置设定的弯折', '3229', '24', '0', '0', '3.907', '93.77', '直筋'] },
  { h: 'h-[34px]', cells: ['5', '箍筋.1', '8', null, '195', 'stirrup1', '2*(1060+210)+2*(11.9*d)', '', '2730', '164', '0', '0', '1.078', '176.849', '箍筋'] },
  { h: 'h-[34px]', cells: ['6', '箍筋.2', '8', null, '195', 'stirrup2', '2*(210+198)+2*(11.9*d)', '', '1006', '164', '0', '0', '0.397', '65.169', '箍筋'] },
  { h: 'h-[24px]', cells: ['7', '箍筋.3', '8', null, '485', 'tie', '210+2*(11.9*d)', '', '400', '164', '0', '0', '0.158', '25.912', '箍筋'] },
];

const RebarTable = () => (
  <table className="w-full table-fixed border-collapse leading-3 font-['Liberation_Mono','Noto_Sans_CJK_SC',monospace]">
    <thead>
      <tr className="h-5">
        {columns.map((c, i) => (
          <th key={i} className={`${c.w} p-0 pt-0.5 font-normal border-r border-b border-[#c0c0c0] whitespace-nowrap ${i === 2 ? 'bg-gradient-to-b from-[#fbd9a0] to-[#f3bd5c] text-[#6b006b]' : 'bg-gradient-to-b from-white to-[#efefef]'}`}>
            <Song>{c.label}</Song>
          </th>
        ))}
      </tr>
    </thead>
    <tbody>
      {rows.map((r) => (
        <tr key={r.cells[0]} className={`${r.h} bg-[#ccffd9]`}>
          {r.cells.map((cell, i) => (
            <td
              key={i}
              className={`p-0 border-b border-[#c0c0c0] whitespace-pre ${i === 1 ? 'border-r border-r-black' : 'border-r'} ${
                i === 0 ? 'bg-gradient-to-r from-white to-[#f0f0f0] text-center' : i === 3 || i === 5 ? '' : 'pl-0.5'
              }`}
            >
              {i === 3 ? <GradeMark /> : i === 5 ? shapes[cell] : <Song>{cell}</Song>}
            </td>
          ))}
        </tr>
      ))}
    </tbody>
  </table>
);

const chevrons = { up: 'M1.500 6.500L5 3l3.500 3.500', down: 'M1.500 3.500L5 7l3.500-3.500', left: 'M6.500 1.500L3 5l3.500 3.500', right: 'M3.500 1.500L7 5 3.500 8.500' };
const ScrollArrow = ({ dir, label }) => (
  <button aria-label={label} className="w-4 h-4 flex items-center justify-center shrink-0">
    <svg viewBox="0 0 10 10" className="w-2.5 h-2.5"><path d={chevrons[dir]} fill="none" stroke="#555" strokeWidth="2" /></svg>
  </button>
);

const DataPanel = () => (
  <div className="flex pb-px">
    <div className="w-3 pt-0.5 shrink-0">
      <button aria-label="关闭面板" className="block"><svg viewBox="0 0 11 11" className="w-[11px] h-[11px]"><path d="M.5.500h10v10H.5z" fill="#f4eeee" stroke="#8c6c6c" /><path d="M2.500 2.500l6 6M8.500 2.500l-6 6" stroke="#5c2020" strokeWidth="1.500" /></svg></button>
      <svg className="w-3 h-[185px]"><path d="M4.500 4v182M9.500 4v182" stroke="#b5b5b5" strokeWidth="2" strokeDasharray="2 3" /></svg>
    </div>
    <div className="flex-1 min-w-0 ml-px">
      <div className="h-7">
        <Band>
          <NavButton label="首条" d="M2 2h2v12H2zM12 2v12L5 8z" color="#c4c4c4" />
          <NavButton label="上一条" d="M11 2v12L4 8z" color="#c4c4c4" />
          <NavButton label="下一条" d="M5 2v12l7-6z" color="#1f6fe0" />
          <NavButton label="末条" d="M3 2v12l7-6zM10 2h2.500v12H10z" color="#1f6fe0" />
          <Sep />
          <NavButton label="上移" d="M8 3l5 5H10v5H6V8H3z" color="#b9b9b9" />
          <NavButton label="下移" d="M8 13L3 8h3V3h4v5h3z" color="#2b6be0" />
          <Sep />
          <span className="flex ml-0.5">
            <Tool icon="insert" disabled>插入</Tool>
            <Tool icon="remove" disabled>删除</Tool>
            <Tool icon="scaleRebar">缩尺配筋</Tool>
            <Tool icon="rebarInfo">钢筋信息</Tool>
            <Tool icon="rebarLib">钢筋图库</Tool>
            <Tool icon="other" arrow>其他</Tool>
            <Tool>关闭</Tool>
          </span>
          <Sep />
          <span className="ml-1 whitespace-nowrap">单构件钢筋总重(kg) : 516.629</span>
        </Band>
      </div>
      <div className="border border-[#a0a0a0] mr-0.5 bg-[#f0f0f0]">
        <div className="flex h-[153px]">
          <div className="flex-1 min-w-0 overflow-hidden"><RebarTable /></div>
          <div className="w-[17px] flex flex-col justify-between py-px">
            <ScrollArrow dir="up" label="向上" />
            <span className="w-4 h-[26px] mt-12 bg-[#cdcdcd]" />
            <ScrollArrow dir="down" label="向下" />
          </div>
        </div>
        <div className="flex items-center h-[17px] pr-4">
          <ScrollArrow dir="left" label="向左" />
          <div className="flex-1"><div className="w-2/3 h-4 bg-[#cdcdcd]" /></div>
          <ScrollArrow dir="right" label="向右" />
        </div>
      </div>
    </div>
  </div>
);

const StatusCell = ({ children, className }) => (
  <span className={`h-5 leading-[18px] px-px border border-[#d0d0d0] bg-gradient-to-b from-white to-[#f0f0f0] whitespace-pre ${className}`}>
    <Song>{children}</Song>
  </span>
);

const StatusBar = () => (
  <footer className="flex items-end gap-0.5 h-[22px] font-['Liberation_Mono','Noto_Sans_CJK_SC',monospace]">
    <StatusCell className="w-[148px]">X=7720 Y=4038</StatusCell>
    <StatusCell className="w-[78px]">层高:3.55m</StatusCell>
    <StatusCell className="w-[98px]">底标高:-3.58m</StatusCell>
    <StatusCell className="w-12">1(2)</StatusCell>
    <StatusCell className="flex-1"> </StatusCell>
    <StatusCell className="w-[70px]">97.5 FPS</StatusCell>
  </footer>
);

const swirl = 'M21 3c-2 3-5 1-9 2-6 1-9 5-8 10 2 7 12 7 14 1 1-4-3-7-6-5-3 2-1 5 1 4';
const apps = [
  { name: '搜狗', art: <><circle cx="8" cy="7" r="5" /><circle cx="16" cy="7" r="5" /><circle cx="8" cy="17" r="5" /><circle cx="16" cy="17" r="5" /><path d="M12 1c-4 5 4 6 0 11s4 6 0 11M1 12c5-4 6 4 11 0s6 4 11 0" fill="none" stroke="#000a0c" strokeWidth="1.300" /></>, fill: '#e4e4e4' },
  { name: '浏览器', art: <><path d={swirl} fill="none" stroke="#ddd" strokeWidth="3.500" /><path d={swirl} fill="none" stroke="#000a0c" strokeWidth="1.300" /></> },
  { name: 'Edge', gap: true, art: <path d="M2 11C3 4 8 2 12 2c6 0 10 4 10 9v3H9c0 5 7 6 12 3v4c-7 3-17 2-17-6 0-5 4-8 7-8-2 1-3 2-3 4h8c0-6-9-6-14 0z" fill="#0a79d8" /> },
  { name: '应用商店', art: <><path d="M2 7l20-2v17L2 20z" fill="#fff" /><path d="M8 6c0-6 8-6 8 0" fill="none" stroke="#fff" strokeWidth="1.500" /><path d="M6 10.500l4.500-.5v3.500H6zM12 10l5-.5v4h-5zM6 15h4.500v3.500L6 18zM12 15h5v4.500l-5-.7z" fill="#000a0c" /></> },
  { name: '文件资源管理器', art: <><path d="M1 3h7l2 2h13v15H1z" fill="#ffe08f" /><path d="M1 3h7v2H1z" fill="#e8a820" /><path d="M5 21v-8h14v8h-4v-4H9v4z" fill="#3aa4dc" /></> },
  { name: 'GGJ', art: <path d={swirl} fill="none" stroke="#1f8fe6" strokeWidth="4.500" />, open: true },
  { name: '安全浏览器', art: <><circle cx="12" cy="12" r="10" fill="#f0f7ea" /><circle cx="12" cy="12" r="9" fill="#57b52a" /><path d="M7 12.500h10c0-7-10-7-10 0s8 5 9.500 3" fill="none" stroke="#fff" strokeWidth="2.200" /><path d="M2 20C6 8 14 2 22 3" fill="none" stroke="#8fdc4f" strokeWidth="1.500" /></>, open: true },
  { name: '算量', art: <><path d={swirl} fill="none" stroke="#2a8fc9" strokeWidth="4.500" /><path d="M3 8l13 11-5 4q-8-2-9-9z" fill="#e2405c" /><path d="M5 13l7 6" stroke="#fbd5dc" strokeWidth="2" strokeDasharray="2 1" /></>, open: true },
  { name: '钢筋算量', art: <><rect width="24" height="24" rx="4" fill="#0f8ff0" /><path d="M12 5v13M5 12.500h13M12 5h3.500M6.500 13c-1 4 1 6 5.500 5M18.500 10v5" fill="none" stroke="#fff" strokeWidth="1.800" /></>, open: true, active: true },
];

const SogouMark = ({ className }) => (
  <svg viewBox="0 0 28 28" className={className}>
    <path d="M2 4l21-3 3 21-20 5z" fill="#f04e17" />
    <path d="M21 8c-5-3-14-2-13 2s12 2 12 6-9 5-14 2" fill="none" stroke="#fff" strokeWidth="4" />
  </svg>
);

const Taskbar = () => (
  <div className="flex items-center h-10 bg-[#000a0c] text-white">
    <button aria-label="开始" className="w-12 h-full flex items-center justify-center bg-black">
      <svg viewBox="0 0 16 16" className="w-4 h-4"><path d="M0 2l7-1v6.500H0zM8 1l8-1v7.500H8zM0 8.500h7V15l-7-1zM8 8.500h8V16l-8-1z" fill="#fff" /></svg>
    </button>
    <label className="w-86 h-full flex items-center gap-1 pl-2 pr-3 bg-[#333]">
      <svg viewBox="0 0 24 24" className="w-6 h-6 shrink-0"><circle cx="12" cy="12" r="9" fill="none" stroke="#fff" strokeWidth="2.800" /></svg>
      <input aria-label="搜索" placeholder="在这里输入你要搜索的内容" className="flex-1 min-w-0 text-sm bg-transparent outline-none placeholder:text-[#8c8c8c]" />
      <svg viewBox="0 0 16 18" className="w-4 h-4.5 shrink-0"><path d="M5.500 1.500h5v9h-5zM2.500 8v4.500h11V8M8 13v4M5 16.500h6" fill="none" stroke="#999" /></svg>
    </label>
    <div className="flex h-full ml-0.5">
      {apps.map((a) => (
        <button key={a.name} aria-label={a.name} className={`w-[49px] h-full flex flex-col items-center pt-2 ${a.gap ? 'ml-1' : ''} ${a.active ? 'bg-[#333d40]' : ''}`}>
          <svg viewBox="0 0 24 24" className="w-6 h-6" fill={a.fill}>{a.art}</svg>
          {a.open && <span className={`h-0.5 mt-auto bg-[#76b9ed] ${a.active ? 'w-full' : 'w-10'}`} />}
        </button>
      ))}
    </div>
    <div className="ml-auto flex items-center h-full">
      <div className="w-14 text-center leading-[17px]">26%<br />CPU使用</div>
      <svg viewBox="0 0 16 16" className="w-4 h-4 ml-3.5"><path d="M2.500 11L8 5.500l5.500 5.500" fill="none" stroke="#fff" strokeWidth="1.400" /></svg>
      <svg viewBox="0 0 16 16" className="w-4 h-4 ml-2"><path d="M0 1h16v14H0z" fill="#3c4347" /><path d="M5 3h11v10H5z" fill="#76b900" /><path d="M1 8c3-5 9-5 12 0-3 5-9 4-12 0zm4 0c2-2 4-2 5 0" fill="none" stroke="#1d2b00" /></svg>
      <svg viewBox="0 0 18 16" className="w-4.5 h-4 ml-2"><path d="M4.500 4.500h11v8h-11zM16 7h1.500v3H16M1 2v3h4V2M3 5v4" fill="none" stroke="#fff" strokeWidth="1.300" /><path d="M7 6h7v5H7z" fill="#fff" /></svg>
      <svg viewBox="0 0 16 16" className="w-4 h-4 ml-2"><path d="M2 14C2 7 7 2 14 2M5 14c0-5 4-9 9-9M8 14c0-3 3-6 6-6" fill="none" stroke="#bbb" strokeWidth="1.400" /><path d="M11 14a3 3 0 013-3v3z" fill="#fff" /></svg>
      <svg viewBox="0 0 18 16" className="w-4.5 h-4 ml-1.5"><path d="M1 5.500h3l4-3.500v12l-4-3.500H1zM10.500 5c1.500 2 1.500 4 0 6M13 3.500c2 3 2 6 0 9M15.500 2c2.500 4 2.500 8 0 12" fill="none" stroke="#ddd" strokeWidth="1.200" /></svg>
      <span className="ml-1.5 text-sm">中</span>
      <SogouMark className="w-4 h-4 ml-3.5" />
      <div className="w-16 ml-3 text-center leading-[18px]">8:29<br />2017/7/25</div>
      <button aria-label="通知" className="ml-4 mr-3">
        <svg viewBox="0 0 26 26" className="w-6.5 h-6.5"><path d="M1 4h16v11H8l-3 3v-3H1z" fill="#fff" /><path d="M4 7h10M4 9.500h10M4 12h7" stroke="#333" /><circle cx="17" cy="18" r="7.500" fill="#333" stroke="#888" /><text x="17" y="22" fontSize="11" fontWeight="bold" fill="#fff" textAnchor="middle">2</text></svg>
      </button>
      <span className="h-full border-l border-[#777] w-1" />
    </div>
  </div>
);

const ImeBar = () => (
  <div className="absolute left-[602px] bottom-[50px] flex items-center text-[#1f72c6]">
    <SogouMark className="w-7 h-7 z-10" />
    <div className="flex items-center gap-1.5 h-6 -ml-6 pl-7 pr-0.5 bg-white border border-[#a9c4dc]">
      <span className="w-4 text-[15px] leading-5 font-bold">中</span>
      <svg viewBox="0 0 16 16" className="w-4 h-4"><circle cx="4" cy="5" r="1.800" fill="none" stroke="#1f72c6" strokeWidth="1.200" /><path d="M10 8h3.500c.5 3-1 4.500-3 5.500 1-1.500 1-2 0-2.500z" fill="#1f72c6" /></svg>
      <svg viewBox="0 0 16 16" className="w-4 h-4"><rect x="5.500" y="1" width="5" height="9" rx="2.500" fill="#1f72c6" /><path d="M3 7c0 6 10 6 10 0M8 12v3M5 15h6" fill="none" stroke="#1f72c6" strokeWidth="1.500" /></svg>
      <svg viewBox="0 0 16 16" className="w-4 h-4"><rect x=".7" y="2.700" width="14.600" height="11" rx="1" fill="none" stroke="#1f72c6" strokeWidth="1.400" /><path d="M3 5.500h10M3 8h10" stroke="#1f72c6" strokeWidth="1.500" strokeDasharray="1.500 1" /><path d="M4 11h8" stroke="#1f72c6" strokeWidth="1.500" /></svg>
      <svg viewBox="0 0 16 16" className="w-4 h-4"><circle cx="6" cy="4" r="3" fill="#b3bfd6" /><path d="M1 14V9q5-3 8 0v5z" fill="#b3bfd6" /><path d="M8 8h8v7H8z" fill="#e8edf5" stroke="#b3bfd6" /><text x="12" y="14" fontSize="6" fill="#8795b5" textAnchor="middle">16</text></svg>
      <svg viewBox="0 0 16 16" className="w-4 h-4"><path d="M5 2c1 2 5 2 6 0l4 2-1.500 4L12 7.500V15H4V7.500L2.500 8 1 4z" fill="#1f72c6" /></svg>
      <svg viewBox="0 0 16 16" className="w-4 h-4"><path d="M2.500 14L9 7.500" stroke="#1f72c6" strokeWidth="3" /><path d="M15 4l-3 2-2-2 2-3c-4-1-6 3-4 6s7 1 7-3z" fill="#1f72c6" /></svg>
    </div>
  </div>
);

const App = () => {
  return (
    <div className={`relative min-h-screen flex flex-col overflow-hidden bg-[#f0f0f0] text-black text-xs ${UI}`}>
      <TitleBar />
      <MenuBar />
      <MainToolbar />
      <main className="flex-1 flex">
        <Sidebar />
        <div className="flex-1 min-w-0 flex flex-col ml-1">
          <EditToolbars />
          <div className="relative flex-1 min-h-[200px] bg-black overflow-hidden">
            <Viewport />
            <DisplayPanel />
          </div>
          <SnapBar />
          <DataPanel />
        </div>
      </main>
      <StatusBar />
      <Taskbar />
      <ImeBar />
      <div className="absolute -top-[27px] right-[238px] w-[46px] h-[46px] rounded-full border-2 border-[#dfe7df] bg-[#3fbf57] shadow-md text-white text-[11px] font-bold text-center pt-6 leading-4">68</div>
    </div>
  );
};

export default App;
